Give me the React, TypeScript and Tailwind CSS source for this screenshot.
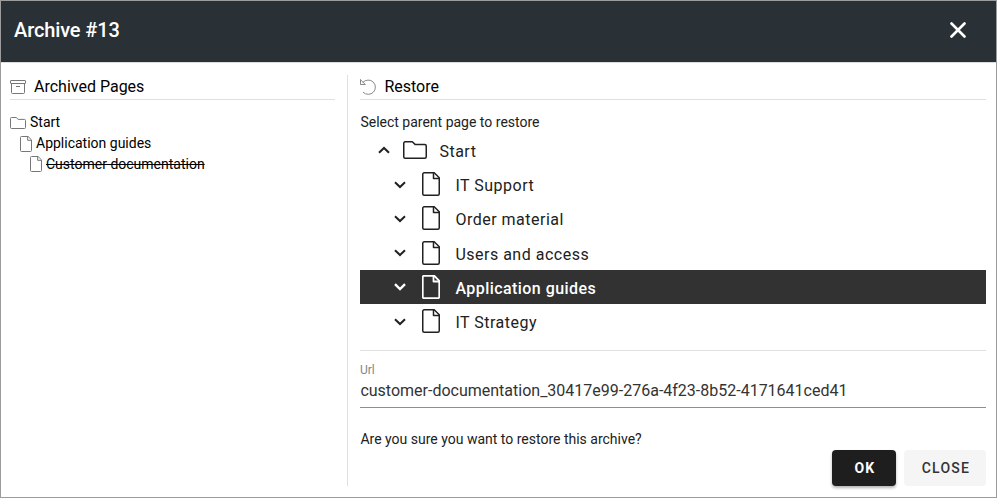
import React from "react";

type IconProps = { className?: string; strokeWidth?: number };

const PageIcon = ({ className, strokeWidth = 1.5 }: IconProps) => (
  <svg viewBox="0 0 18 24" className={className} fill="none" stroke="currentColor" strokeWidth={strokeWidth} strokeLinejoin="round">
    <path d="M2.2.75H12.2L17.25 5.8V21.8a1.45 1.45 0 0 1-1.45 1.45H2.2A1.45 1.45 0 0 1 .75 21.8V2.2A1.45 1.45 0 0 1 2.2.75Z" />
    <path d="M11.5.75V6.5H17.25" />
  </svg>
);

const FolderIcon = ({ className, strokeWidth = 1.5 }: IconProps) => (
  <svg viewBox="0 0 24 18" className={className} fill="none" stroke="currentColor" strokeWidth={strokeWidth} strokeLinejoin="round">
    <path d="M2.2.75H9.3L12.3 3.6H21.8a1.45 1.45 0 0 1 1.45 1.45V15.8a1.45 1.45 0 0 1-1.45 1.45H2.2A1.45 1.45 0 0 1 .75 15.8V2.2A1.45 1.45 0 0 1 2.2.75Z" />
  </svg>
);

const ArchiveIcon = () => (
  <svg viewBox="0 0 16 14" className="h-3.5 w-4 text-[#777]" fill="none" stroke="currentColor" strokeWidth="1" strokeLinejoin="round">
    <rect x=".5" y=".5" width="15" height="3" rx=".5" />
    <path d="M1.5 3.5V12.5a1 1 0 0 0 1 1H13.5a1 1 0 0 0 1-1V3.5M6 6.5H10" />
  </svg>
);

const UndoIcon = () => (
  <svg viewBox="0 0 16 16" className="size-4 text-[#888]" fill="none" stroke="currentColor" strokeWidth="1" strokeLinecap="round" strokeLinejoin="round">
    <path d="M.5.7V5.5H5.3L.6.8" />
    <path d="M3 3.2A7.2 7.2 0 1 1 3.2 13.4" />
  </svg>
);

const Chevron = ({ up = false, bold = false }: { up?: boolean; bold?: boolean }) => (
  <svg viewBox="0 0 12 8" className={up ? "h-2 w-3 -scale-y-100" : "mt-px h-2 w-3"} fill="none" stroke="currentColor" strokeWidth={bold ? 2.4 : 2}>
    <path d="M1 1.2L6 6L11 1.2" />
  </svg>
);

const pages = [
  { name: "IT Support" },
  { name: "Order material" },
  { name: "Users and access" },
  { name: "Application guides", selected: true },
  { name: "IT Strategy" },
];

export default function App() {
  return (
    <div className="flex h-[498px] w-[997px] flex-col border border-[#9c9c9c] bg-white font-['Roboto',sans-serif] text-[#212121]">
      <header className="flex h-[62px] shrink-0 items-center justify-between border-b border-[#dddddd] bg-[#293136] pr-[30px] pb-[3px] pl-[13px] text-white">
        <h1 className="text-[20px] leading-6 font-medium tracking-[-0.12px]">Archive #13</h1>
        <svg viewBox="0 0 16 16" className="size-4" fill="none" stroke="currentColor" strokeWidth="2.6" strokeLinecap="round">
          <path d="M1.5 1.5L14.5 14.5M14.5 1.5L1.5 14.5" />
        </svg>
      </header>
      <main className="flex grow pt-3 pr-[10px] pb-[11px] pl-[9px]">
        <section className="w-[325px] text-black">
          <h2 className="flex h-[25px] items-center border-b border-[#e0e0e0] pb-px text-[16px]">
            <ArchiveIcon />
            <span className="ml-2">Archived Pages</span>
          </h2>
          <ul className="mt-3 text-[14px] leading-[21px]">
            <li className="flex items-center">
              <FolderIcon className="mt-px mr-1 h-3 w-4 text-[#777]" />
              Start
            </li>
            <li className="flex items-center pl-[10px]">
              <PageIcon className="mr-1 h-4 w-3 text-[#777]" />
              Application guides
            </li>
            <li className="flex items-center pl-5">
              <PageIcon className="-mt-px mr-1 h-4 w-3 text-[#777]" />
              <s>Customer documentation</s>
            </li>
          </ul>
        </section>
        <section className="ml-3 flex grow flex-col border-l border-[#e0e0e0] pl-3">
          <h2 className="flex h-[25px] shrink-0 items-center border-b border-[#e0e0e0] pb-px text-[16px] text-black">
            <UndoIcon />
            <span className="ml-2 pl-[0.4px]">Restore</span>
          </h2>
          <p className="mt-3 h-[21px] pl-[0.4px] text-[14px] leading-[21px]">Select parent page to restore</p>
          <ul className="text-[16px] tracking-[0.5px]">
            <li className="flex h-[34.2px] items-center pl-[18px]">
              <Chevron up />
              <FolderIcon className="ml-[13px] h-[18px] w-6" />
              <span className="ml-[12.4px] pt-[3px]">Start</span>
            </li>
            {pages.map((page) => (
              <li
                key={page.name}
                className={
                  page.selected
                    ? "flex h-[34.2px] items-center bg-[#323232] pl-[34.4px] font-medium tracking-[0.44px] text-white"
                    : "flex h-[34.2px] items-center pl-[34.4px]"
                }
              >
                <Chevron bold={page.selected} />
                <PageIcon className="ml-4 h-6 w-[18px]" strokeWidth={page.selected ? 1.8 : 1.5} />
                <span className="ml-[15px] pt-[3.8px]">{page.name}</span>
              </li>
            ))}
          </ul>
          <div className="mt-3 flex h-[58px] flex-col border-t border-b border-t-[#e0e0e0] border-b-[#8f8f8f] pt-[11px]">
            <label className="text-[12px] leading-4 text-[#858585]">Url</label>
            <span className="pt-px pl-[0.4px] text-[16px] leading-6 text-[#333]">customer-documentation_30417e99-276a-4f23-8b52-4171641ced41</span>
          </div>
          <p className="mt-[21px] h-[21px] pl-[0.4px] text-[14px] leading-[21px]">Are you sure you want to restore this archive?</p>
          <div className="flex justify-end gap-2 text-[14px] tracking-[0.0892857143em]">
            <button className="h-9 w-16 rounded bg-[#1e1e1e] pl-[2px] font-bold text-white shadow-[0_2px_3px_rgba(0,0,0,0.3)]">OK</button>
            <button className="h-9 w-[82px] rounded bg-[#f5f5f5] pl-[2px] font-medium text-[#333]">CLOSE</button>
          </div>
        </section>
      </main>
    </div>
  );
}
